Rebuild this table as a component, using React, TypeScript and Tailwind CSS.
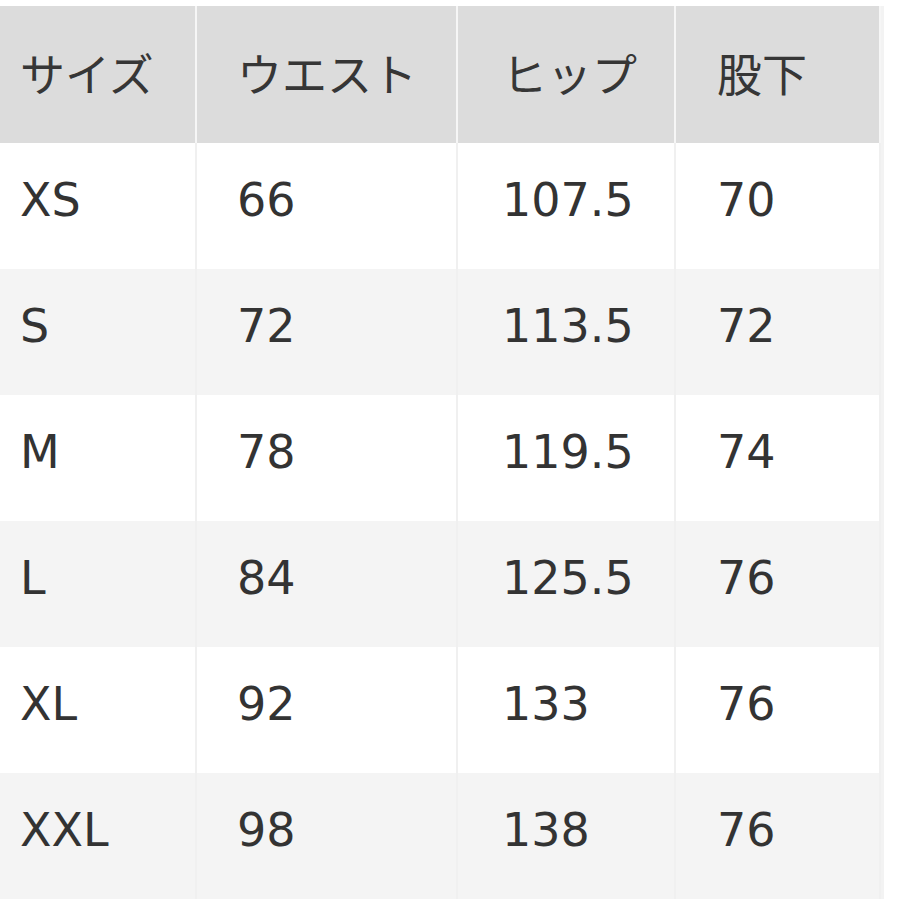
const HEADERS = ['サイズ', 'ウエスト', 'ヒップ', '股下'];

const ROWS = [
  ['XS', '66', '107.5', '70'],
  ['S', '72', '113.5', '72'],
  ['M', '78', '119.5', '74'],
  ['L', '84', '125.5', '76'],
  ['XL', '92', '133', '76'],
  ['XXL', '98', '138', '76'],
];

// column widths include the 2px divider on the right
const COL_W = ['w-[197px]', 'w-[261px]', 'w-[218px]', 'w-[205px]'];
const COL_PAD = ['pl-5', 'pl-[40px]', 'pl-[44px]', 'pl-[41px]'];

export default function App() {
  return (
    <div className="w-[900px] h-[900px] overflow-hidden bg-white pt-[6px]">
      <div className="w-[884px] border-r-[3px] border-[#f3f3f3]">
        {/* Header */}
        <div className="flex h-[137px] bg-[#dcdcdc]">
          {HEADERS.map((h, i) => (
            <div
              key={h}
              className={`${COL_W[i]} ${COL_PAD[i]} flex items-center pb-1 border-r-2 border-[#f6f6f6] text-[45px] text-[#363636]`}
              style={{ fontFamily: '"Noto Sans CJK JP", "Noto Sans", sans-serif' }}
            >
              {h}
            </div>
          ))}
        </div>

        {/* Body */}
        {ROWS.map((row, r) => (
          <div
            key={row[0]}
            className={`flex h-[126px] ${r % 2 === 0 ? 'bg-white' : 'bg-[#f4f4f4]'}`}
          >
            {row.map((cell, i) => (
              <div
                key={i}
                className={`${COL_W[i]} ${COL_PAD[i]} flex items-center pb-3 border-r-2 border-[#f0f0f0] text-[46px] text-[#333333]`}
                style={{ fontFamily: '"DejaVu Sans", Verdana, sans-serif' }}
              >
                {cell}
              </div>
            ))}
          </div>
        ))}
      </div>
    </div>
  );
}
